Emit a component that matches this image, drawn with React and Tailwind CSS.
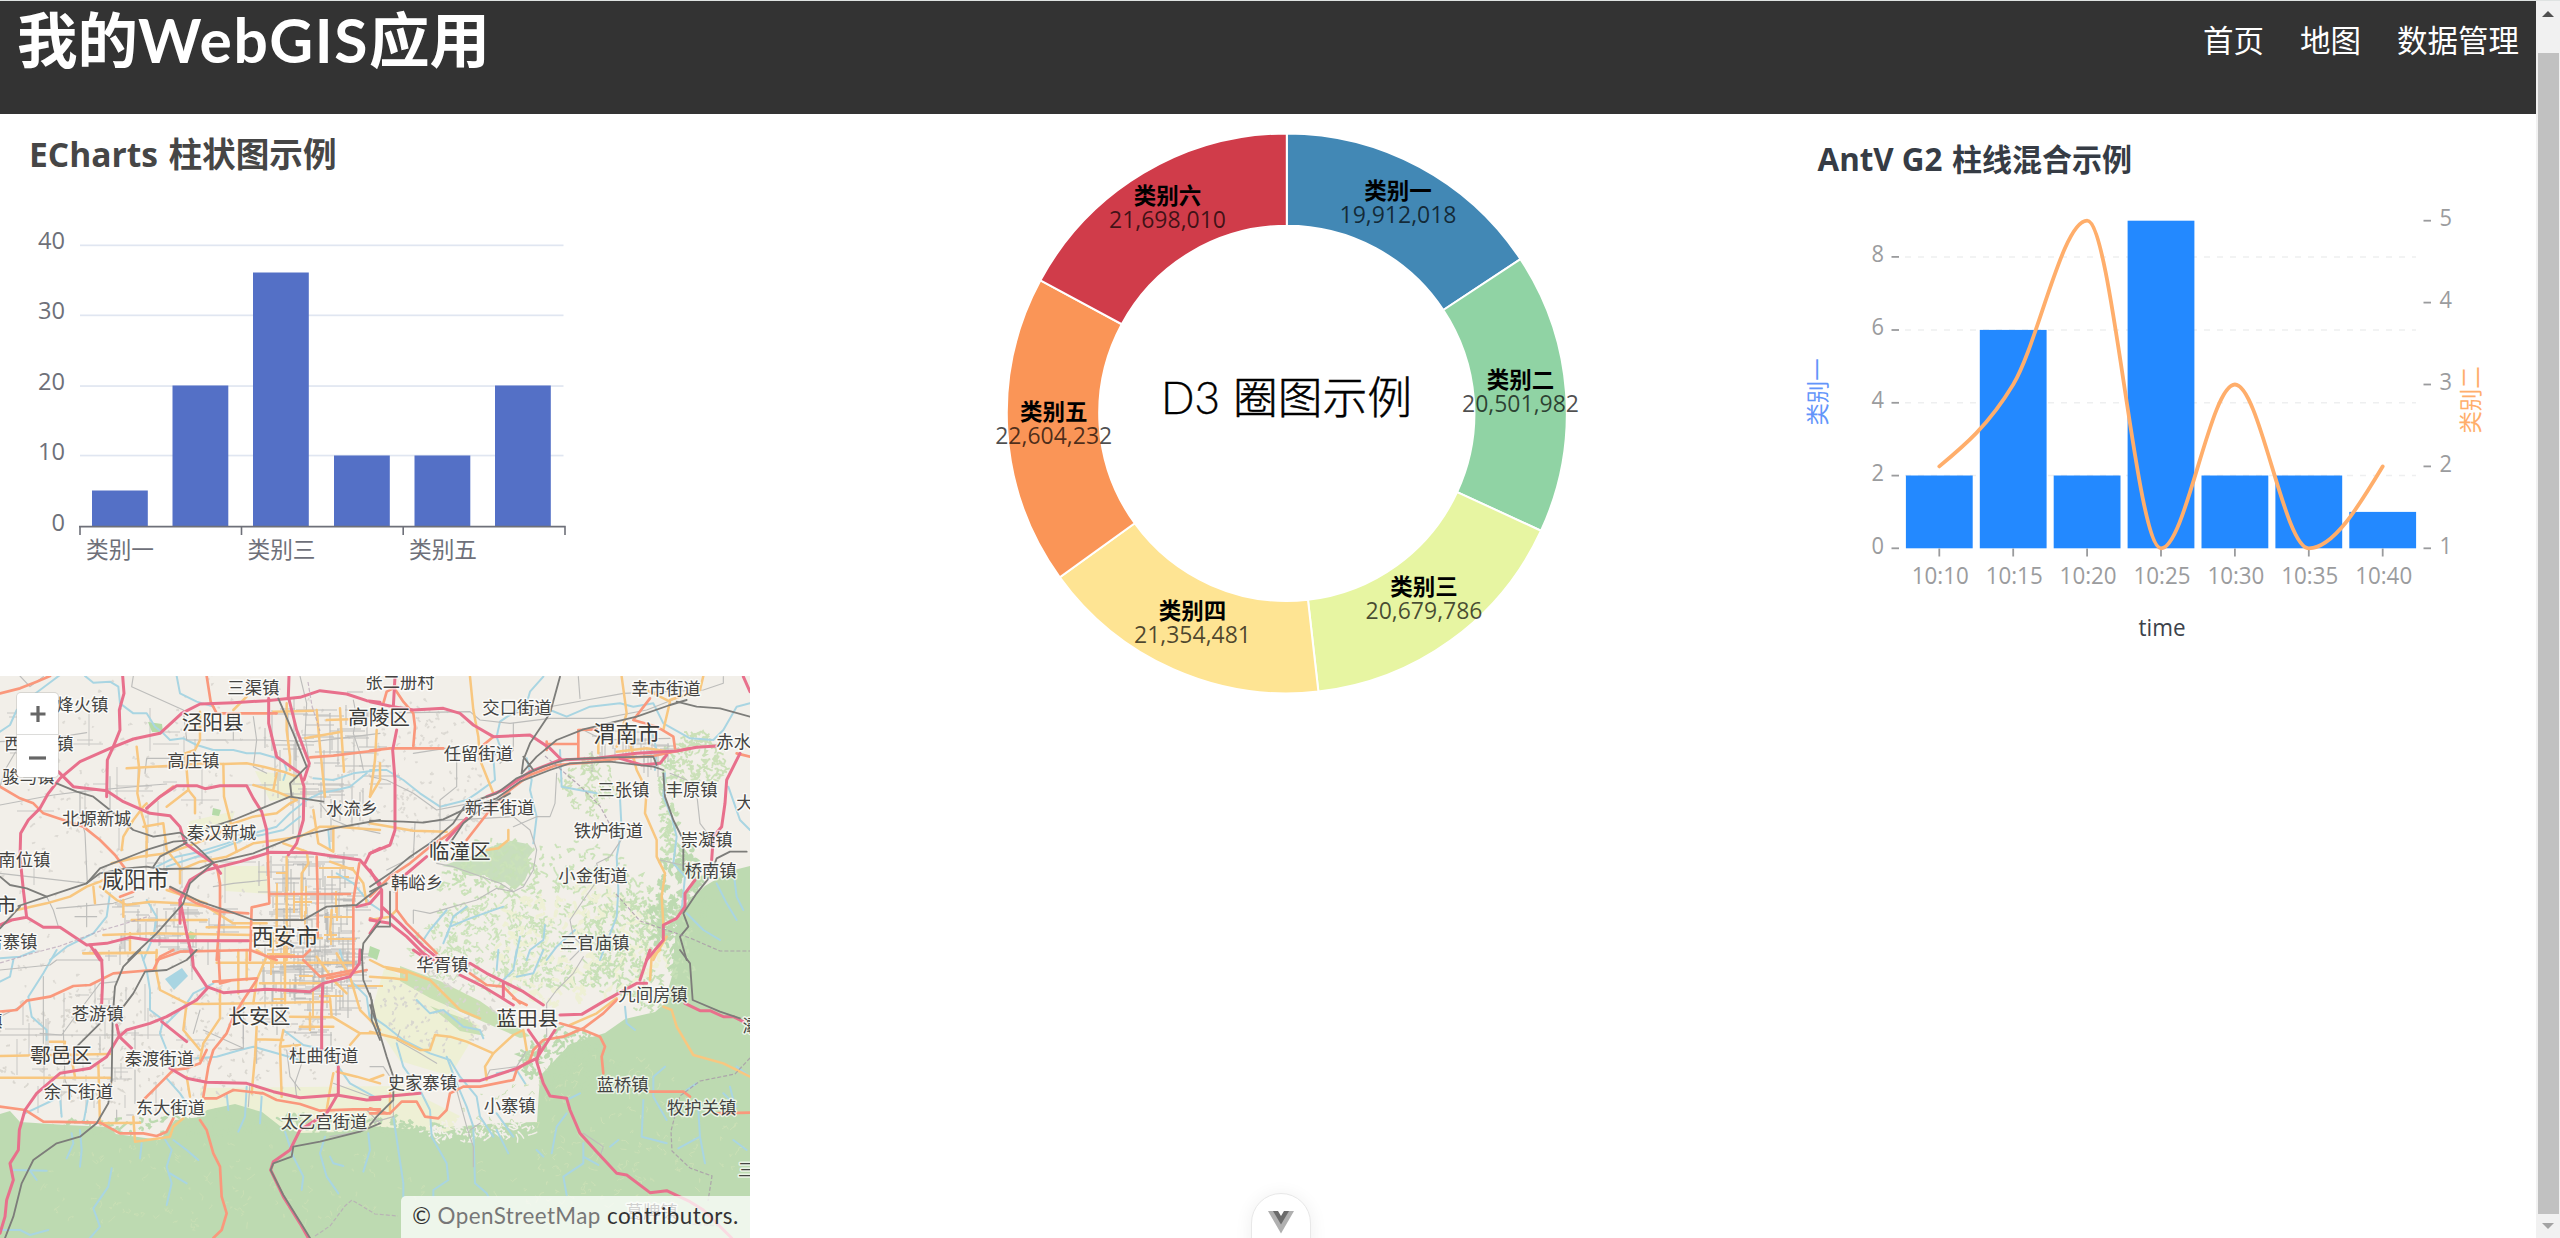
import React from "react";

const CJK = "'Noto Sans CJK SC', sans-serif";
const SEGOE = "'Open Sans', 'Noto Sans CJK SC', sans-serif";

function T({ x, y, w, size, anchor = "start", children, ...rest }) {
  return (
    <text
      x={x}
      y={y}
      fontSize={size}
      textAnchor={anchor}
      textLength={w}
      lengthAdjust="spacingAndGlyphs"
      fontFamily={SEGOE}
      {...rest}
    >
      {children}
    </text>
  );
}

/* ---------- left: bar chart ---------- */
function BarChart() {
  const bars = [
    [92, 490.5], [172.5, 385.5], [253, 272.5], [334, 455.5], [414.5, 455.5], [495, 385.5],
  ];
  return (
    <svg viewBox="0 114 750 562" className="block h-[562px] w-[750px]">
      <T x="29" y="166.5" w="129" size="34" fontWeight="700" fill="#464646">ECharts</T>
      <T x="168.5" y="167" w="168" size="33.6" fontWeight="700" fill="#464646">柱状图示例</T>
      {[["40", 245.3], ["30", 315.3], ["20", 386], ["10", 455.5]].map(([t, y]) => (
        <g key={t}>
          <rect x="80" y={y - 0.8} width="483.5" height="1.7" fill="#e0e6f1" />
          <T x="65" y={y + 4} w="27" size="23.6" anchor="end" fill="#6e7079">{t}</T>
        </g>
      ))}
      <T x="65" y="531.2" w="13.5" size="23.6" anchor="end" fill="#6e7079">0</T>
      {bars.map(([x, y]) => (
        <rect key={x} x={x} y={y} width="55.8" height={526.5 - y} fill="#5470c6" />
      ))}
      <path d="M79 526.6H565.7M80 526V535M241.5 526V535M403.2 526V535M565 526V535" stroke="#6e7079" strokeWidth="1.6" fill="none" />
      {[["类别一", 86], ["类别三", 247.5], ["类别五", 409]].map(([t, x]) => (
        <T key={t} x={x} y="558" w="68" size="22.5" fill="#6e7079">{t}</T>
      ))}
    </svg>
  );
}

/* ---------- middle: donut ---------- */
const SLICES = [
  ["类别一", 19912018, "#4288b5", 1398, 198.5, "19,912,018"],
  ["类别二", 20501982, "#90d3a4", 1520.5, 387.5, "20,501,982"],
  ["类别三", 20679786, "#e7f5a2", 1424, 594.5, "20,679,786"],
  ["类别四", 21354481, "#fee493", 1192.5, 618.5, "21,354,481"],
  ["类别五", 22604232, "#fa9557", 1053.7, 419.5, "22,604,232"],
  ["类别六", 21698010, "#d03c4a", 1167.5, 203.5, "21,698,010"],
];

function Donut() {
  const total = SLICES.reduce((s, d) => s + d[1], 0);
  const cx = 1286.8, cy = 413.4, R = 280, r = 187.6;
  const pt = (a, q) => `${(cx + q * Math.sin(a)).toFixed(2)} ${(cy - q * Math.cos(a)).toFixed(2)}`;
  let acc = 0;
  const arcs = SLICES.map((s) => {
    const a0 = (acc / total) * Math.PI * 2;
    acc += s[1];
    const a1 = (acc / total) * Math.PI * 2;
    return `M${pt(a0, R)}A${R} ${R} 0 0 1 ${pt(a1, R)}L${pt(a1, r)}A${r} ${r} 0 0 0 ${pt(a0, r)}Z`;
  });
  return (
    <svg viewBox="750 114 1030 586" className="block h-[586px] w-[1030px]">
      {arcs.map((d, i) => (
        <path key={d} d={d} fill={SLICES[i][2]} stroke="#fff" strokeWidth="2" />
      ))}
      <text x="1161" y="413.5" fontSize="45" fontWeight="300" textLength="59" lengthAdjust="spacingAndGlyphs" fontFamily="Lato, sans-serif" stroke="#000" strokeWidth="0.4">D3</text>
      <T x="1233" y="413.5" w="179" size="44.8" fontWeight="300" stroke="#000" strokeWidth="0.5">圈图示例</T>
      {SLICES.map(([n, , , x, y, v]) => (
        <g key={n}>
          <T x={x} y={y} w="67.5" size="22.4" anchor="middle" fontWeight="700">{n}</T>
          <T x={x} y={y + 24} w="117" size="23" anchor="middle" fill="#000" fillOpacity="0.7">{v}</T>
        </g>
      ))}
    </svg>
  );
}

/* ---------- right: mixed chart ---------- */
function MixedChart() {
  const times = ["10:10", "10:15", "10:20", "10:25", "10:30", "10:35", "10:40"];
  const vals = [2, 6, 2, 9, 2, 2, 1];
  const left = [["8", 256.9], ["6", 330], ["4", 402.8], ["2", 475.6], ["0", 548.3]];
  const right = [["5", 220.7], ["4", 302.6], ["3", 384.5], ["2", 466.4], ["1", 548.3]];
  const xs = [1939.3, 2013.2, 2087.1, 2161, 2234.9, 2308.8, 2382.7];
  const ys = [466.4, 384.5, 220.7, 548.3, 384.5, 548.3, 466.4];
  const m = [-0.83, -1.66, 0, 0, 0, 0, -1.66];
  const h = 24.63;
  let d = `M${xs[0]} ${ys[0]}`;
  for (let i = 1; i < 7; i++) {
    d += `C${xs[i - 1] + h} ${ys[i - 1] + m[i - 1] * h} ${xs[i] - h} ${ys[i] - m[i] * h} ${xs[i]} ${ys[i]}`;
  }
  return (
    <svg viewBox="1780 114 756 586" className="block h-[586px] w-[756px]">
      <T x="1817.5" y="170.7" w="125" size="31.5" fontWeight="700" fill="#363c45">AntV G2</T>
      <T x="1952" y="171" w="180" size="30.5" fontWeight="700" fill="#363c45">柱线混合示例</T>
      {left.map(([t, y]) => (
        <g key={t}>
          {t !== "0" && (
            <path d={`M1905 ${y}H2416`} stroke="#eeeff0" strokeWidth="1.5" strokeDasharray="6 7" />
          )}
          <path d={`M1891.5 ${y}H1899`} stroke="#9a9b9d" strokeWidth="1.8" />
          <T x="1884" y={y + 5.2} w="12.5" size="23" anchor="end" fill="#9b9c9e">{t}</T>
        </g>
      ))}
      {right.map(([t, y]) => (
        <g key={t}>
          <path d={`M2423.5 ${y}H2431`} stroke="#9a9b9d" strokeWidth="1.8" />
          <T x="2439.5" y={y + 5.2} w="12.5" size="23" fill="#9b9c9e">{t}</T>
        </g>
      ))}
      {vals.map((v, i) => (
        <rect key={i} x={xs[i] - 33.4} y={548.3 - v * 36.4} width="66.8" height={v * 36.4} fill="#2389ff" />
      ))}
      {times.map((t, i) => (
        <g key={t}>
          <path d={`M${xs[i]} 548.5V556.5`} stroke="#9a9b9d" strokeWidth="1.8" />
          <T x={xs[i] + 1} y="583.8" w="57" size="23.5" anchor="middle" fill="#9b9c9e">{t}</T>
        </g>
      ))}
      <path d={d} fill="none" stroke="#ffae6b" strokeWidth="3.8" strokeLinecap="round" />
      <T x="2162" y="636.3" w="47" size="23.5" anchor="middle" fill="#3c424b">time</T>
      <text transform="translate(1825.5 392) rotate(-90)" textAnchor="middle" fontSize="22.4" fontFamily={CJK} fill="#6395fa">类别一</text>
      <text transform="translate(2479 400) rotate(-90)" textAnchor="middle" fontSize="22.4" fontFamily={CJK} fill="#ffae6b">类别二</text>
    </svg>
  );
}

/* ---------- map ---------- */
const PINK = "#e8708c";
const ORANGE = "#fa987c";
const YELLOW = "#f8c780";
const GREY = "#bdbdbb";
const RAIL = "#7d7d7a";
const WATER = "#a9d5e2";
const FOREST = "#bddab1";

const FW = { [PINK]: 9, [ORANGE]: 8, [YELLOW]: 7.5, [GREY]: 3.4, [RAIL]: 5.5, [WATER]: 6 };

const NW = [
  [WATER, "200,0 160,30 100,75 50,120 30,165 0,185"],
  [WATER, "255,18 280,38 330,35 355,50 360,100 400,130 440,130 465,170 490,190 510,210 550,205 590,225 640,240 700,240 740,250 780,250 850,270 860,300 850,330"],
  [WATER, "530,18 540,70 590,95 640,110"],
  [WATER, "940,325 1000,330 1060,310 1140,300"],
  [WATER, "470,590 530,560 600,545 680,520 760,490 830,470 870,430 920,390 960,370 1010,360 1050,350 1100,310"],
  [WATER, "500,590 560,570 650,540 740,505 850,480 900,440"],
  [WATER, "330,670 320,740 280,790 200,830 150,870"],
  [WATER, "1010,610 1060,640 1110,700 1140,720"],
  [WATER, "440,690 470,740 460,800 430,870"],
  [WATER, "985,480 990,540"],
  [GREY, "400,18 395,50 550,120 560,210 800,210 940,215 1140,190"],
  [GREY, "0,215 120,210 260,188"],
  [GREY, "0,405 160,375 240,365 460,345 500,342"],
  [GREY, "240,365 240,430 255,490 262,640 0,610"],
  [GREY, "60,18 90,50 130,20"],
  [GREY, "435,310 440,265 520,265 600,290"],
  [GREY, "760,140 770,210 760,290 800,310"],
  [GREY, "700,130 700,210"],
  [GREY, "140,680 160,720 175,770"],
  [GREY, "0,350 15,300 50,240"],
  [GREY, "1060,90 1070,140 1060,190 1080,250 1090,300"],
  [GREY, "640,650 700,640 800,630"],
  [GREY, "170,715 340,700 400,680"],
  [GREY, "225,740 290,740M260,700 260,770"],
  [GREY, "900,18 920,100 915,200 930,290"],
  [GREY, "990,130 990,250"],
  [GREY, "960,400 1000,450 1050,470 1140,490"],
  [GREY, "330,320 330,420"],
  [YELLOW, "410,230 418,300 412,370 425,430 440,480 440,560"],
  [YELLOW, "380,295 460,290 560,285 600,280 670,282 740,280 790,290 850,305 890,320"],
  [YELLOW, "600,125 600,210 585,240 555,250 560,300 565,360 500,410"],
  [YELLOW, "565,360 585,385 585,430"],
  [YELLOW, "670,282 672,380 690,450 710,545"],
  [YELLOW, "365,540 370,500 400,450 430,410 440,400"],
  [YELLOW, "430,470 490,460 500,540 540,590 540,640"],
  [YELLOW, "335,580 420,560 500,550 560,530 640,500 700,460 760,440 830,430 870,400 890,390"],
  [YELLOW, "50,720 140,700 210,680 260,650 300,635 340,615"],
  [YELLOW, "300,650 350,690 380,705 450,695 540,700 620,710 700,760 800,760"],
  [YELLOW, "860,100 860,180 870,260 870,300"],
  [YELLOW, "950,120 960,230 975,380"],
  [YELLOW, "1020,115 1025,200 1032,305"],
  [YELLOW, "915,205 1025,185M980,150 1050,148"],
  [YELLOW, "820,125 940,122"],
  [YELLOW, "760,345 830,365 890,390 M830,310 820,360"],
  [YELLOW, "540,600 600,575 680,560 760,520 830,510 900,500 960,470 1010,470 1140,480"],
  [YELLOW, "850,520 920,545 925,580 905,610 905,680 905,750"],
  [YELLOW, "940,420 955,520 1000,545 1000,470"],
  [YELLOW, "990,575 1060,600 1090,640 1100,700"],
  [YELLOW, "395,750 620,750M310,795 460,790 760,795M620,772 760,772M570,812 760,812M390,790 390,840M250,850 470,848"],
  [YELLOW, "500,660 620,700M280,650 285,700M370,690 370,740"],
  [YELLOW, "1110,380 1140,330 1140,280"],
  [YELLOW, "860,560 860,870M995,720 990,790 M830,670 830,820"],
  [YELLOW, "700,120 740,80"],
  [ORANGE, "0,70 60,55 110,35 150,18"],
  [ORANGE, "620,18 632,95 650,130 830,130"],
  [ORANGE, "930,262 1000,257 1140,240"],
  [ORANGE, "0,350 60,385 100,400 130,430 190,450 250,470 300,510 345,555 375,595"],
  [ORANGE, "440,415 480,380 520,350"],
  [ORANGE, "650,585 660,640 660,730 650,870"],
  [ORANGE, "803,540 808,700 755,712 750,870"],
  [ORANGE, "810,672 1050,672"],
  [ORANGE, "950,560 953,670 953,800 "],
  [ORANGE, "1078,580 1060,690 1060,870"],
  [ORANGE, "510,655 590,700 660,725 745,730"],
  [ORANGE, "470,870 540,845 750,840 830,870"],
  [ORANGE, "360,680 400,665 "],
  [PINK, "368,18 372,70 358,120 360,180 340,230 322,270 320,380"],
  [PINK, "0,765 35,750 80,742 70,660 60,560 62,490 85,450 120,415 145,370 180,325 240,275 330,235 400,207 480,190 545,130 600,102 700,98 800,92 900,82 960,62 1040,72 1100,92 1140,97"],
  [PINK, "175,305 220,350 320,362 370,395 450,430 510,437 540,470 555,520 590,545 640,580 662,610"],
  [PINK, "440,415 480,380 530,347 590,347 615,356 660,347 740,347 760,385 785,425 800,480 803,545"],
  [PINK, "806,85 806,160 830,260 900,310 912,350 910,450 890,520 865,555"],
  [PINK, "867,18 865,80 890,180 928,280 912,330"],
  [PINK, "540,760 540,690 570,630 620,600 720,575 810,547 930,548 1080,570 1140,640"],
  [PINK, "540,690 560,790 578,870"],
  [PINK, "80,742 130,772 180,772 260,825 320,820 390,802 460,812 745,812"],
  [PINK, "270,825 300,870"],
  [PINK, "1095,580 1110,550 1140,535"],
  [PINK, "1070,710 1110,700 1140,665"],
  [RAIL, "170,340 230,365 280,380 330,420 400,480 460,500 540,488 590,530 640,578 600,595 490,597"],
  [RAIL, "55,708 140,680 260,640 300,610 380,595 440,590 500,600"],
  [RAIL, "260,640 300,595 440,540 520,515 560,512"],
  [RAIL, "460,590 480,560 560,518"],
  [RAIL, "620,475 700,450 870,380 970,395"],
  [RAIL, "835,85 880,190 920,290 870,340 875,380"],
  [RAIL, "640,578 760,550 880,502 1000,475 1140,450"],
  [RAIL, "510,650 600,695 690,725 760,750 910,750 980,710 1070,705 1140,650"],
  [RAIL, "385,870 470,790 550,700 570,640 640,578"],
  [RAIL, "0,620 30,645 80,655 140,680M0,775 60,710"],
  [RAIL, "1085,870 1090,820 1140,755"],
];

const NE = [
  [WATER, "520,20 480,65 470,100 390,155 380,200 390,230 370,260 375,330 320,370 290,390 210,410 150,370 100,330 50,300 0,300"],
  [WATER, "470,265 485,330 480,360 500,440 490,520"],
  [WATER, "540,120 590,140 660,110 750,100 790,110 850,100 880,160 960,205 1030,210 1060,180 1100,110 1140,100"],
  [WATER, "570,240 575,350 680,370 "],
  [WATER, "750,385 755,480 740,560 745,660 740,740 690,870"],
  [WATER, "885,310 880,380 905,440 920,500 910,580 945,620 935,720"],
  [WATER, "400,710 300,745 240,770 220,820M290,710 250,740 230,800M230,720 180,780 160,810"],
  [WATER, "450,800 435,870M525,765 520,810 480,840 470,870M615,780 560,830 530,870"],
  [WATER, "1075,350 1110,450 1140,480M1040,640 1070,700 1100,750M1090,600 1100,680 1120,720M950,730 1000,780 1050,810"],
  [WATER, "845,180 860,240 855,300"],
  [GREY, "0,130 300,125 330,150 420,160 540,145 700,145 830,120 920,85"],
  [GREY, "430,160 430,240 390,280"],
  [GREY, "560,310 555,400 540,440 500,440 430,470"],
  [GREY, "130,250 260,230 260,350 210,390 210,520"],
  [GREY, "0,320 50,330 130,370 200,420 300,400"],
  [GREY, "160,455 430,440 480,480 500,540 490,600 460,650 430,665 390,640 250,590 200,580"],
  [GREY, "430,665 380,655 320,690 250,710 180,730 130,720 130,760"],
  [GREY, "625,20 630,85M430,130 650,90 760,70 1000,60 1060,40 1060,20"],
  [GREY, "760,500 720,560 680,580 690,620 640,690 600,750 610,800 640,830 600,870"],
  [GREY, "870,570 1000,600"],
  [GREY, "900,310 950,330 980,370 990,460 1020,500"],
  [GREY, "640,180 700,210 900,205"],
  [GREY, "135,460 130,560 50,600"],
  [YELLOW, "300,20 310,120 325,200 330,270 370,370"],
  [YELLOW, "20,180 15,270 0,380"],
  [YELLOW, "0,460 130,482 230,485"],
  [YELLOW, "415,480 415,510 385,535 350,540"],
  [YELLOW, "755,20 770,130 740,230"],
  [YELLOW, "780,220 800,300 830,360 825,430 860,510 860,560 885,610 875,680 880,760"],
  [YELLOW, "830,60 900,95 880,180 M685,210 685,250"],
  [YELLOW, "740,245 830,235 900,245 930,240"],
  [YELLOW, "890,800 860,850 850,870"],
  [YELLOW, "0,750 60,740 80,720"],
  [YELLOW, "1000,18 990,60 900,90"],
  [ORANGE, "0,242 60,235 220,235"],
  [ORANGE, "70,50 100,95 130,130 135,170 130,228"],
  [ORANGE, "340,225 370,200"],
  [ORANGE, "40,100 50,65 80,50"],
  [ORANGE, "530,215 530,240M530,222 625,222 625,265M625,180 625,222M625,180 680,178"],
  [ORANGE, "790,150 860,170 910,200 915,235M790,150 840,85"],
  [ORANGE, "290,510 360,420 420,360 480,315 560,285 650,278 750,265 850,258 960,235"],
  [ORANGE, "0,680 60,620 120,580 180,530 240,490 290,445"],
  [ORANGE, "80,620 80,720 110,760 200,850"],
  [ORANGE, "1100,250 1140,260M0,745 30,755"],
  [PINK, "0,95 70,110 130,120 220,115 270,130 310,165 370,200 480,195 540,235 575,270"],
  [PINK, "75,20 70,110M80,180 68,240 75,330 75,480 60,525 0,550"],
  [PINK, "1120,20 1140,65"],
  [PINK, "350,380 400,360 480,305 570,270 680,265 800,250 920,243 980,232 1040,228"],
  [PINK, "750,265 815,285 870,280 890,255"],
  [PINK, "1110,250 1070,330 1065,400 1055,470 1030,500 1025,570"],
  [PINK, "975,630 945,670 945,710 920,745 880,765 880,810 830,870"],
  [PINK, "230,510 290,445M105,615 170,560"],
  [PINK, "0,600 35,660 35,740 0,790M35,710 90,760 160,830 210,870M0,750 60,760 110,800 160,850 190,870"],
  [RAIL, "570,20 540,130 480,220 460,270 455,310"],
  [RAIL, "490,300 460,260M455,310 500,260 560,210 640,178 800,140 900,105 950,90"],
  [RAIL, "920,95 980,110 1050,115 1140,140"],
  [RAIL, "0,650 60,610 120,560 180,520 250,460 290,400 380,370 440,325 520,290 590,268 720,262 850,260 860,285"],
  [RAIL, "0,452 100,455 160,458 220,448 290,415 380,385 450,335 540,300 600,280 720,275 850,290 880,300"],
  [RAIL, "880,310 885,380 910,450 940,510 940,600"],
  [RAIL, "1130,545 1080,545 1040,565 1020,620 980,670 940,730 955,770 930,800 950,870"],
  [RAIL, "240,520 280,460 330,420 420,370M60,665 60,770 20,770"],
  [RAIL, "0,665 50,640"],
];

const SW = [
  [WATER, "0,25 60,20 110,0M170,0 130,70 85,140 95,200 140,240 140,270"],
  [WATER, "40,30 30,80 0,95"],
  [WATER, "420,0 440,60 450,120 450,180 490,210 480,250 500,300 510,330M500,385 540,430 560,460"],
  [WATER, "640,100 580,130 560,160 500,220"],
  [WATER, "590,325 650,320 720,300 760,290 830,310 900,330M850,240 910,285 980,300 1050,400 1140,450"],
  [WATER, "180,440 185,500M265,440 250,520M215,550 220,580 200,625M240,540 245,600 240,650M160,450 75,490"],
  [WATER, "335,655 325,710 280,775 300,830 270,864"],
  [WATER, "490,560 515,600 500,650 515,700 500,765M510,670 560,700M520,570 560,600 595,630M425,580 420,625"],
  [WATER, "975,560 960,610 980,680 1015,730M990,620 1000,640 1030,648M1105,550 1110,600 1090,665"],
  [WATER, "855,545 880,620 910,680 905,720"],
  [WATER, "0,840 60,840 90,855 145,840M40,660 140,662M90,662 110,690"],
  [WATER, "740,410 735,500 715,545M785,440 780,520M680,430 685,480"],
  [WATER, "1020,0 1040,80 1100,140 1110,210 1140,250"],
  [GREY, "0,60 150,45 170,30 310,30M130,80 130,280M0,255 360,255"],
  [GREY, "190,240 195,390 215,440M120,250 185,255 240,180 300,100 350,95"],
  [GREY, "405,240 405,300M405,360 405,460M600,180 580,250"],
  [GREY, "610,240 730,295 730,220M730,295 690,300"],
  [GREY, "770,250 770,340M880,280 905,340 885,400 890,440M750,400 745,470M730,160 730,280"],
  [GREY, "0,200 60,170M300,260 300,310M300,210 300,160"],
  [GREY, "1100,480 1140,520M990,560 1080,545M1000,400 1070,425 1140,450"],
  [GREY, "860,300 870,380 900,420 M350,480 350,520M380,495 400,495"],
  [YELLOW, "0,318 330,312M0,383 330,383M150,275 195,275 190,305M225,380 215,330M295,340 300,520 420,518"],
  [YELLOW, "470,0 468,60 480,120 560,160 600,162 770,160 990,155"],
  [YELLOW, "250,10 470,8M560,160 550,240 600,300M660,120 660,205 610,280 600,330"],
  [YELLOW, "770,230 765,320 755,430M850,240 840,290 845,440M770,268 850,270M840,290 900,285"],
  [YELLOW, "560,380 570,440M400,500 405,575 510,560 520,530 550,505"],
  [YELLOW, "650,38 1060,38M715,0 715,130M740,0 740,90M855,0 855,160M780,100 960,100"],
  [YELLOW, "870,200 1000,202 1080,250 1050,285M990,145 995,200M900,230 1000,230M930,190 930,240M1080,250 1140,250"],
  [YELLOW, "1000,370 990,420 980,480M1010,365 1070,380 1140,400M950,20 1000,90 1040,130"],
  [YELLOW, "1010,10 1050,80 1080,180 1140,240M800,20 770,90 760,160M770,0 830,40"],
  [ORANGE, "0,185 50,180 80,152 150,140 220,108 270,105 340,70 460,60 480,20 520,0"],
  [ORANGE, "655,0 660,100 700,90 770,85M640,95 770,85"],
  [ORANGE, "770,90 730,150 700,200 680,250 640,300 625,350 610,440"],
  [ORANGE, "0,470 75,480 130,515 300,518 360,550 430,550 470,558 500,545 520,505"],
  [ORANGE, "620,300 600,340M430,450 480,400 520,360 560,355 600,340"],
  [ORANGE, "615,445 650,445 700,420 790,430 830,450 900,462 960,482 1060,478 1140,478"],
  [ORANGE, "600,510 620,540 640,610 660,650 665,740 680,790 665,840 640,864"],
  [ORANGE, "810,20 910,20 930,0M910,30 960,80 1060,60 1060,0M980,85 1100,60"],
  [PINK, "285,0 305,30 308,90 305,160M350,225 358,260 395,295"],
  [PINK, "575,0 580,50 620,110 670,128 800,118 930,125 970,100 1050,80 1078,40 1080,0"],
  [PINK, "625,112 590,150 500,200 450,220 380,240 355,262 320,320 270,355 180,370 110,430 75,480 58,540 55,600 30,640 40,690 20,750 15,800 0,850"],
  [PINK, "485,215 560,275 M510,355 560,385 620,397 740,400 820,425 900,443 1010,435 1100,450 1140,448"],
  [PINK, "968,105 965,190 965,300M1015,350 1015,430 980,490 900,540 870,600 820,635 812,660 850,740 900,820 925,864"],
  [RAIL, "420,0 370,50 345,110 338,200 335,390 325,460 290,520 240,560 170,580 100,630 65,700 40,800 15,864"],
  [RAIL, "590,0 560,30 500,60 435,65 400,130 370,170M300,220 230,290"],
  [RAIL, "1085,0 1090,90 1115,150 1115,210 1140,270"],
  [RAIL, "1140,520 1080,545 960,575 880,590 875,620 820,640 812,660 850,735 900,815 930,864"],
];

const SE = [
  [WATER, "385,0 380,60M440,0 430,60 400,90M520,0 490,70 440,80M140,150 180,190 220,180 280,230 330,240 340,265"],
  [WATER, "0,195 50,230 100,270 180,310 240,330 270,380 320,440 330,500 370,560"],
  [WATER, "80,280 100,350 150,420 180,480 185,560 230,640 235,690 190,720 190,740"],
  [WATER, "70,500 85,600 100,700 100,740M230,320 260,400 290,470 310,530 315,700 350,730 355,740"],
  [WATER, "380,490 430,560M380,540 415,610M590,490 560,530 545,610M640,580 640,640 580,680 590,735M640,620 685,645M500,600 520,620"],
  [WATER, "765,170 770,220 795,240M885,350 850,380 850,440 890,510M820,450 815,560 890,580M985,480 990,560 1005,640M990,560 925,595M980,400 950,420"],
  [WATER, "1090,570 1130,600M1060,430 1100,470 M1100,350 1140,380M590,450 630,430M1080,410 1090,450M720,590 745,570M380,370 440,360 465,400"],
  [GREY, "640,20 610,70 560,120 530,160 530,260M470,300 440,350 360,360 350,380"],
  [GREY, "260,420 290,530 310,590 310,650M640,550 700,590 690,620M90,240 80,270 150,310 200,340"],
  [GREY, "0,350 40,350 60,380M0,520 70,500 70,450M300,540 330,520"],
  [YELLOW, "0,30 40,50 100,60 180,90 270,180 330,205M0,80 70,85 110,90 110,70 50,55"],
  [YELLOW, "0,245 80,265 150,300 180,300 195,255 240,260 290,275 370,310 430,255 460,240 470,300"],
  [YELLOW, "370,310 345,350 350,390M0,390 40,375M60,430 60,490"],
  [YELLOW, "870,0 845,20 840,90M740,145 680,190 600,225M880,170 905,180 920,230 970,315 1060,340 1140,380"],
  [ORANGE, "300,70 350,105 400,110 450,160M430,145 470,165"],
  [ORANGE, "740,150 700,190 640,235 580,260 520,270 490,300 480,330 440,360 430,390 330,410 280,410 240,430 230,480 205,505 165,500 140,455 95,455 60,490 0,490"],
  [ORANGE, "570,220 640,240 690,260 705,290 695,320 700,370M840,425 940,425 960,440M1040,490 1140,488M0,475 50,490"],
  [PINK, "130,0 160,20M300,40 350,70 400,95 460,125 520,165M270,75 340,110 390,140 430,165M400,95 400,140"],
  [PINK, "570,195 635,193 700,155 745,130 800,100 830,100M840,0 810,90"],
  [PINK, "945,160 990,182 1020,182 1060,200 1090,200 1120,215"],
  [PINK, "555,240 500,325 440,355 330,392 270,392M475,240 510,290 500,335 520,400 540,438 590,445 600,480 630,550 680,605 740,670 770,675 840,728 890,722 960,755 1000,780 1085,864"],
  [PINK, "0,443 70,437 150,430"],
  [RAIL, "930,0 960,40 968,150 1050,185 1110,205M0,130 20,220 50,320 70,380 70,450 20,500 0,525"],
  [RAIL, "0,165 30,250"],
];

const LABELS = [
  ["nw", 247, 104, "烽火镇", 52], ["nw", 117, 221, "西张堡镇", 52], ["nw", 85, 321, "骏马镇", 52],
  ["nw", 760, 52, "三渠镇", 52], ["nw", 638, 157, "泾阳县", 62], ["nw", 580, 272, "高庄镇", 52],
  ["nw", 1137, 144, "高陵区", 62], ["nw", 1200, 35, "张二册村", 52], ["nw", 1056, 415, "水流乡", 52],
  ["nw", 290, 446, "北塬新城", 52], ["nw", 665, 487, "秦汉新城", 52], ["nw", 73, 569, "南位镇", 52],
  ["nw", 405, 631, "咸阳市", 67], ["nw", 855, 801, "西安市", 67], ["nw", 18, 706, "市", 62],
  ["nw", 34, 815, "店寨镇", 52], ["ne", 441, 112, "交口街道", 52], ["ne", 888, 56, "幸市街道", 52],
  ["ne", 770, 193, "渭南市", 67], ["ne", 325, 251, "任留街道", 52], ["ne", 1117, 214, "赤水镇", 52],
  ["ne", 760, 360, "三张镇", 52], ["ne", 965, 360, "丰原镇", 52], ["ne", 1125, 399, "大", 52],
  ["ne", 389, 413, "新丰街道", 52], ["ne", 715, 482, "铁炉街道", 52], ["ne", 1010, 510, "崇凝镇", 52],
  ["ne", 269, 546, "临潼区", 62], ["ne", 1022, 603, "桥南镇", 52], ["ne", 141, 639, "韩峪乡", 52],
  ["ne", 669, 616, "小金街道", 52], ["ne", 674, 817, "三官庙镇", 52],
  ["sw", -18, 212, "镇", 52], ["sw", 293, 192, "苍游镇", 52], ["sw", 778, 200, "长安区", 62], ["sw", 183, 318, "鄠邑区", 62],
  ["sw", 478, 326, "秦渡街道", 52], ["sw", 971, 318, "杜曲街道", 52], ["sw", 235, 425, "余下街道", 52],
  ["sw", 511, 474, "东大街道", 52], ["sw", 972, 514, "太乙宫街道", 52],
  ["se", 217, 45, "华胥镇", 52], ["se", 849, 135, "九间房镇", 52], ["se", 472, 205, "蓝田县", 62],
  ["se", 157, 398, "史家寨镇", 52], ["se", 419, 468, "小寨镇", 52], ["se", 758, 403, "蓝桥镇", 52],
  ["se", 995, 474, "牧护关镇", 52], ["se", 1170, 227, "灞源", 52], ["se", 1130, 659, "三", 52], ["se", 845, 784, "葛牌镇", 52],
];

const ORIGIN = { nw: [0, -6], ne: [370, -6], sw: [0, 274], se: [370, 274] };

function rng(seed) {
  let s = seed;
  return () => {
    s = (s * 16807) % 2147483647;
    return s / 2147483647;
  };
}

/* short wiggly dabs scattered inside an ellipse */
function scatter(seed, n, cx, cy, rx, ry, len) {
  const r = rng(seed * 7919);
  let d = "";
  for (let i = 0; i < n; i++) {
    const a = r() * 6.283;
    const q = Math.sqrt(r());
    const x = cx + rx * q * Math.cos(a);
    const y = cy + ry * q * Math.sin(a);
    const k = () => ((r() - 0.5) * len).toFixed(1);
    d += `M${x.toFixed(1)} ${y.toFixed(1)}q${k()} ${k()} ${k()} ${k()}l${k()} ${k()}`;
  }
  return d;
}

/* irregular street mesh */
function mesh(seed, n, x, y, w, h, max) {
  const r = rng(seed * 7919);
  let d = "";
  for (let i = 0; i < n; i++) {
    const px = Math.round(x + r() * w);
    const py = Math.round(y + r() * h);
    const l = Math.round(max * (0.3 + r() * 0.7));
    d += r() > 0.5 ? `M${px} ${py}h${l}` : `M${px} ${py}v${l}`;
  }
  return d;
}

const toPath = (s) =>
  s.split("M").map((p) => "M" + p.trim().split(/\s+/).join("L")).join("");

function Lines({ list, color }) {
  return list
    .filter((l) => l[0] === color)
    .map((l) => (
      <path key={l[1]} d={toPath(l[1])} fill="none" stroke={color} strokeWidth={FW[color]} strokeLinecap="round" strokeLinejoin="round" />
    ));
}

const TILES = [["nw", NW], ["ne", NE], ["sw", SW], ["se", SE]];

function MapView() {
  const label = ([k, x, y, t, s]) => (
    <text
      key={t + x}
      x={ORIGIN[k][0] + x / 3}
      y={ORIGIN[k][1] + y / 3 + (s / 3) * 0.36}
      fontSize={s / 3}
      textAnchor="middle"
      fontFamily={CJK}
      fill={s > 55 ? "#3c3c3a" : "#444442"}
      stroke="#fff"
      strokeOpacity="0.7"
      strokeWidth="3"
      strokeLinejoin="round"
      paintOrder="stroke"
    >
      {t}
    </text>
  );
  return (
    <div className="relative h-[562px] w-[750px] overflow-hidden bg-[#f2efe9]">
      <svg viewBox="0 0 750 562" className="block h-full w-full">
        <path d="M200 412L400 410 460 440 440 470 200 450Z M255 95L300 100 310 120 270 125Z M190 145L235 135 230 150 185 158Z M385 290L430 320 480 350 450 400 400 385 370 340Z M220 190L265 190 270 218 225 215Z" fill="#eef0d5" />
        <path d="M0 438L10 435 20 446 66 449 110 451 116 458 160 464 175 444 200 441 207 434 235 428 262 436 280 450 300 457 340 456 370 450 420 454 445 456 465 450 500 447 537 446 540 400 570 368 605 357 625 343 655 336 664 328 672 300 676 255 684 230 705 210 730 195 750 190V562H0Z" fill={FOREST} />
        <path d="M480 178L498 168 512 165 528 168 534 174 528 182 530 192 525 204 515 214 505 206 495 207 485 199 470 200 455 192 442 190 462 183Z" fill={FOREST} opacity="0.8" />
        <path d={scatter(12, 90, 490, 190, 48, 26, 9)} stroke="#c7e0b7" strokeWidth="2" fill="none" />
        <path d={scatter(11, 380, 545, 238, 115, 75, 9)} stroke="#cbe2ba" strokeWidth="1.8" fill="none" />
        <path d={scatter(14, 160, 580, 270, 90, 60, 12)} stroke="#eef0d5" strokeWidth="3" fill="none" />
        <path d={scatter(17, 260, 640, 275, 55, 60, 9)} stroke="#c7e0b7" strokeWidth="1.8" fill="none" />
        <path d={scatter(13, 180, 490, 270, 80, 45, 8)} stroke="#cfe4bf" strokeWidth="1.4" fill="none" />
        <path d={scatter(19, 90, 590, 110, 30, 30, 9)} stroke="#cbe0b8" strokeWidth="1.6" fill="none" />
        <path d={scatter(21, 110, 700, 85, 25, 30, 9)} stroke="#cbe0b8" strokeWidth="1.8" fill="none" />
        <path d={scatter(23, 80, 668, 130, 10, 60, 9)} stroke="#c7e0b7" strokeWidth="2" fill="none" />
        <path d={scatter(27, 170, 680, 230, 28, 60, 11)} stroke={FOREST} strokeWidth="3" fill="none" />
        <path d={scatter(29, 160, 570, 385, 50, 32, 10)} stroke={FOREST} strokeWidth="2.2" fill="none" />
        <path d="M400 290L440 305 480 325 530 360 520 362 470 340 430 322 400 305ZM430 330L470 345 485 360 460 355Z" fill="#c9e0b4" />
        <path d={scatter(31, 180, 250, 450, 200, 10, 9)} stroke={FOREST} strokeWidth="2.4" fill="none" />
        <path d={scatter(37, 90, 480, 452, 60, 12, 10)} stroke="#f2efe9" strokeWidth="1.4" fill="none" />
        <path d={scatter(41, 160, 600, 460, 150, 80, 9)} stroke="#cbe0b6" strokeWidth="1" fill="none" />
        <path d={scatter(43, 120, 220, 510, 210, 45, 8)} stroke="#c9dfb4" strokeWidth="0.9" fill="none" />
        <path d={scatter(47, 420, 180, 180, 220, 200, 4)} stroke="#dddad4" strokeWidth="1.8" fill="none" />
        <path d={scatter(53, 300, 150, 370, 200, 60, 4)} stroke="#dad7d0" strokeWidth="1.8" fill="none" />
        <path d={scatter(59, 140, 440, 330, 60, 45, 4)} stroke="#d8d6cf" strokeWidth="1.8" fill="none" />
        <path d={scatter(61, 130, 430, 100, 60, 80, 4)} stroke="#dddad4" strokeWidth="1.8" fill="none" />
        <path d={mesh(5, 220, 258, 175, 90, 150, 34)} stroke={GREY} strokeWidth="1.1" fill="none" />
        <path d={mesh(7, 70, 105, 225, 125, 55, 26)} stroke={GREY} strokeWidth="1" fill="none" />
        <path d={mesh(9, 70, 260, 15, 110, 110, 44)} stroke={GREY} strokeWidth="1" fill="none" />
        <path d={mesh(15, 55, 260, 270, 80, 90, 26)} stroke={GREY} strokeWidth="1.1" fill="none" />
        <path d={mesh(25, 34, 580, 55, 90, 25, 24)} stroke={GREY} strokeWidth="1" fill="none" />
        <path d={mesh(26, 40, 5, 30, 230, 160, 44)} stroke="#c9c8c5" strokeWidth="1" fill="none" />
        <path d={mesh(28, 40, 5, 290, 190, 130, 40)} stroke="#c9c8c5" strokeWidth="1" fill="none" />
        <path d={mesh(35, 26, 260, 185, 90, 140, 36)} stroke={YELLOW} strokeWidth="1.8" fill="none" />
        <path d="M148 46L162 48 163 56 152 56Z M213 132l8 2-2 6-7-1Z M190 255l7 3-4 6-6-3Z M370 270l10 4-3 10-9-4Z" fill="#b5dba8" />
        <path d="M165 303L182 292 188 300 174 314Z" fill={WATER} />
        {[WATER, GREY, YELLOW, ORANGE, PINK, RAIL].map((c) => (
          <g key={c}>
            {TILES.map(([k, list]) => (
              <g key={k} transform={`translate(${ORIGIN[k][0]} ${ORIGIN[k][1]}) scale(0.33333)`}>
                <Lines list={list} color={c} />
              </g>
            ))}
          </g>
        ))}
        <path d="M750 382L735 398 700 405 680 420 671 455 672 475 690 492 712 500 708 525M616 218L640 245 690 262 720 275 750 275M720 550L690 548M545 80L580 110 600 130 616 160" fill="none" stroke="#a897a8" strokeWidth="1.2" strokeDasharray="4 2" opacity="0.8" />
        <path d="M315 560L330 550 345 530 352 524 375 538 398 540M308 6L312 30 320 55M0 287L30 278 60 270 100 255 150 240" fill="none" stroke="#b7a3b7" strokeWidth="1.2" strokeDasharray="4 2" opacity="0.7" />
        {LABELS.map(label)}
      </svg>
      <div className="absolute left-[17px] top-[17px] flex flex-col gap-[1px] rounded-[4px] bg-[#dcdcda] shadow-[0_0_0_1px_rgba(190,190,185,0.5)]">
        <button type="button" aria-label="zoom in" className="flex h-[41px] w-[41px] items-center justify-center rounded-t-[4px] bg-white">
          <svg viewBox="0 0 16 16" className="h-4 w-4"><path d="M8 0V16M0.5 8H15.5" stroke="#666" strokeWidth="3.2" /></svg>
        </button>
        <button type="button" aria-label="zoom out" className="flex h-[42px] w-[41px] items-center justify-center rounded-b-[4px] bg-white pt-1">
          <svg viewBox="0 0 17 4" className="h-1 w-[17px]"><path d="M0 2H17" stroke="#666" strokeWidth="3.2" /></svg>
        </button>
      </div>
      <div className="absolute bottom-0 right-0 flex h-[42px] w-[349px] items-center justify-center whitespace-nowrap rounded-tl-[5px] bg-white/75 pb-[2px] font-[Lato] text-[22.4px] tracking-[0.45px] text-[#333]">
        <span>©&nbsp;</span>
        <span className="text-[#777]">OpenStreetMap</span>
        <span>&nbsp;contributors.</span>
      </div>
    </div>
  );
}

function ScrollBar() {
  return (
    <div className="flex h-full w-6 shrink-0 flex-col items-center bg-[#f1f1f1]">
      <div className="flex h-[52px] items-start pt-[10px]">
        <svg viewBox="0 0 12 6" className="h-[6px] w-[12px]"><path d="M0 6L6 0 12 6Z" fill="#505050" /></svg>
      </div>
      <div className="h-[1161px] w-[21px] bg-[#c1c1c1]" />
      <div className="flex flex-1 items-start pt-[9px]">
        <svg viewBox="0 0 12 6" className="h-[6px] w-[12px]"><path d="M0 0L6 6 12 0Z" fill="#a3a3a3" /></svg>
      </div>
    </div>
  );
}

export default function App() {
  return (
    <div className="relative flex h-[1238px] w-[2560px] overflow-hidden border-t border-[#dfe3e2] bg-white">
      <div className="flex h-[1237px] w-[2536px] flex-col">
        <header className="flex h-[113px] shrink-0 items-start justify-between bg-[#333] pl-[17px] pr-[17px] text-white">
          <h1 className="flex items-baseline whitespace-nowrap text-[60.5px] font-bold leading-[72px] [font-family:'Noto_Sans_CJK_SC',sans-serif]">
            <span>我的</span>
            <span className="tracking-[1.6px] [font-family:Lato,sans-serif]">WebGIS</span>
            <span>应用</span>
          </h1>
          <nav className="flex gap-[36px] pt-[16px] text-[30.5px] leading-[44px] [font-family:'Noto_Sans_CJK_SC',sans-serif]">
            <a>首页</a>
            <a>地图</a>
            <a>数据管理</a>
          </nav>
        </header>
        <main className="flex">
          <section className="flex flex-col">
            <BarChart />
            <MapView />
          </section>
          <Donut />
          <MixedChart />
        </main>
      </div>
      <ScrollBar />
      <div className="absolute left-[1251px] top-[1192px] flex h-[60px] w-[60px] justify-center rounded-t-full border border-[#e8e8e8] bg-white pt-[17px] shadow-[0_2px_18px_rgba(0,0,0,0.07)]">
        <svg viewBox="0 0 26 23" className="h-[23px] w-[26px]">
          <path d="M0 0H26L13 22.5Z" fill="#b0b0b0" />
          <path d="M5 0H21L13 13.5Z" fill="#6b6b6b" />
          <path d="M10 0H16L13 5Z" fill="#fff" />
        </svg>
      </div>
    </div>
  );
}
